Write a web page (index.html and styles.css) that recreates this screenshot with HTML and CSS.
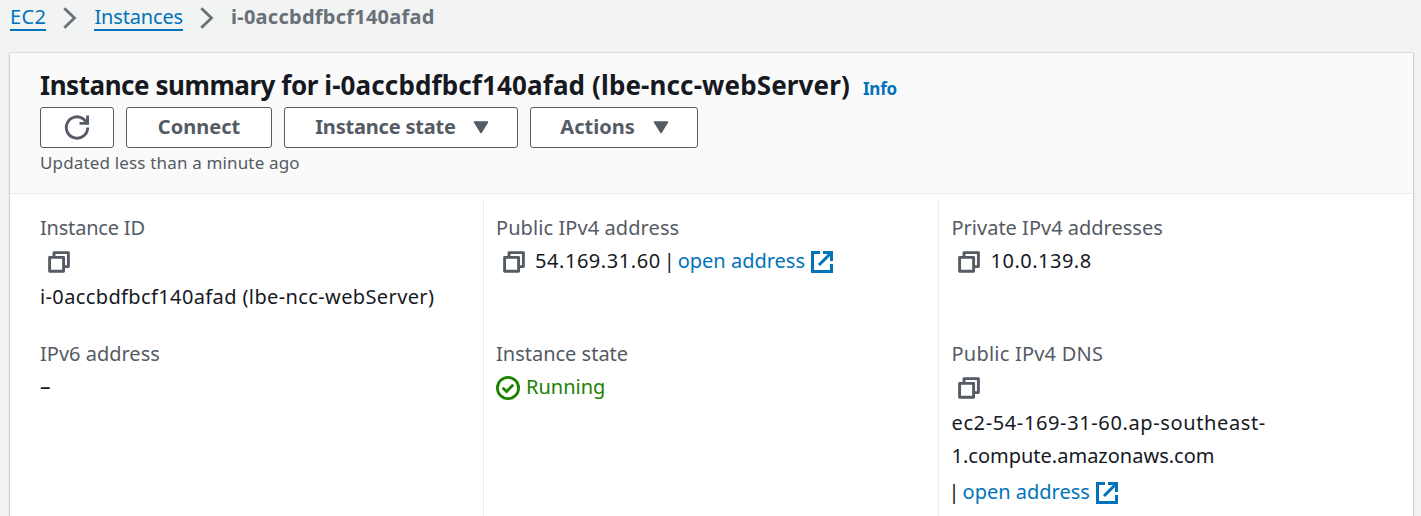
FILE: index.html
```html
<!DOCTYPE html>
<html lang="en">
<head>
<meta charset="utf-8">
<title>Instance summary</title>
<link rel="stylesheet" href="styles.css">
</head>
<body>
<svg class="defs" width="0" height="0" aria-hidden="true">
  <symbol id="chevron" viewBox="0 0 14 22"><path d="M1.3 1.2 L11.5 11 L1.3 20.8" fill="none" stroke="currentColor" stroke-width="2.8"/></symbol>
  <symbol id="copy" viewBox="0 0 22 22"><path d="M1.6 6.4H15.6V20.2H1.6Z M6 6.4V1.6H20.4V15.6H15.6" fill="none" stroke="currentColor" stroke-width="2.9" stroke-linejoin="round"/></symbol>
  <symbol id="external" viewBox="0 0 22 22"><path d="M9 1.5H1.5V20.5H20.5V13M12 1.5H20.5V10M20 2L8 14" fill="none" stroke="currentColor" stroke-width="3"/></symbol>
  <symbol id="caret" viewBox="0 0 16 13"><path d="M1.5 1H14.5L8 11.5Z" fill="currentColor" stroke="currentColor" stroke-width="1.5" stroke-linejoin="round"/></symbol>
</svg>
<nav class="crumbs">
  <a class="crumb crumb-ec2">EC2</a>
  <svg class="chevron"><use href="#chevron"/></svg>
  <a class="crumb crumb-instances">Instances</a>
  <svg class="chevron"><use href="#chevron"/></svg>
  <span class="current">i-0accbdfbcf140afad</span>
</nav>
<main class="panel">
  <header class="head">
    <div class="title-row"><h1 class="title"><span class="title-lead">Instance summary for </span>i-0accbdfbcf140afad (lbe-ncc-webServer)</h1><a class="info">Info</a></div>
    <div class="buttons">
      <button class="btn btn-refresh" aria-label="Refresh"><svg class="refresh" viewBox="0 0 26 26"><path d="M23.7 12.5A10.7 10.7 0 1 1 19.5 4L23.6 8.2M23.6 .5V8.4H15.5" fill="none" stroke="currentColor" stroke-width="2.9"/></svg></button>
      <button class="btn btn-connect"><span>Connect</span></button>
      <button class="btn btn-state"><span>Instance state</span><svg class="caret"><use href="#caret"/></svg></button>
      <button class="btn btn-actions"><span>Actions</span><svg class="caret"><use href="#caret"/></svg></button>
    </div>
    <div class="updated">Updated less than a minute ago</div>
  </header>
  <div class="details">
    <section class="col">
      <div class="field">
        <div class="label l1">Instance ID</div>
        <div class="icon-line"><svg class="copy"><use href="#copy"/></svg></div>
        <div class="value v1">i-0accbdfbcf140afad (lbe-ncc-webServer)</div>
      </div>
      <div class="field">
        <div class="label l2">IPv6 address</div>
        <div class="value"><span class="dash">–</span></div>
      </div>
    </section>
    <section class="col">
      <div class="field">
        <div class="label l3">Public IPv4 address</div>
        <div class="value row"><svg class="copy"><use href="#copy"/></svg><span class="ip">54.169.31.60</span><span class="bar">|</span><a class="open">open address</a><svg class="external"><use href="#external"/></svg></div>
      </div>
      <div class="field">
        <div class="label l4">Instance state</div>
        <div class="value row running"><svg class="status" viewBox="0 0 24 24"><circle cx="12" cy="12" r="10.6" fill="none" stroke="currentColor" stroke-width="2.8"/><path d="M6.6 11.8L10.6 15.5L17.2 8.8" fill="none" stroke="currentColor" stroke-width="2.8"/></svg><span class="state">Running</span></div>
      </div>
    </section>
    <section class="col">
      <div class="field">
        <div class="label l5">Private IPv4 addresses</div>
        <div class="value row"><svg class="copy"><use href="#copy"/></svg><span class="private">10.0.139.8</span></div>
      </div>
      <div class="field">
        <div class="label l6">Public IPv4 DNS</div>
        <div class="icon-line"><svg class="copy"><use href="#copy"/></svg></div>
        <div class="value v2">ec2-54-169-31-60.ap-southeast-</div>
        <div class="value v3">1.compute.amazonaws.com</div>
        <div class="value row last"><span class="bar first">|</span><a class="open">open address</a><svg class="external"><use href="#external"/></svg></div>
      </div>
    </section>
  </div>
</main>
</body>
</html>
```
FILE: styles.css
```css
* { box-sizing: border-box; }
html, body { margin: 0; height: 516px; overflow: hidden; }
body { background: #f2f3f3; color: #16191f; font: 20px/33px "Noto Sans", sans-serif; display: flex; flex-direction: column; white-space: nowrap; }
svg { display: block; flex: none; }
.defs { position: absolute; }
.crumbs { height: 53px; flex: none; padding: 3px 0 0 10px; display: flex; align-items: flex-start; color: #687078; }
.crumb { color: #0073bb; line-height: 28px; height: 28px; border-bottom: 2px solid #0073bb; }
.crumb-ec2 { letter-spacing: .4px; }
.crumb-instances { letter-spacing: -.15px; }
.chevron { width: 14px; height: 22px; margin: 4px 17px 0 17px; }
.current { font-weight: 700; line-height: 28px; letter-spacing: .25px; }
.panel { width: 1403px; height: 463px; margin-left: 10px; background: #fff; box-shadow: 0 0 1px 0 #879196, 0 1px 2px 0 #a5acac; }
.head { height: 141px; background: #fafafa; border-bottom: 1px solid #eaeded; padding: 16px 30px 0; }
.title-row { height: 38px; display: flex; align-items: baseline; gap: 13px; }
.title { margin: 0; font-size: 26px; font-weight: 700; line-height: 33px; letter-spacing: .13px; }
.title-lead { letter-spacing: -.45px; }
.info { color: #0073bb; font-size: 17px; font-weight: 700; letter-spacing: -.2px; }
.buttons { display: flex; gap: 12px; height: 41px; }
.btn { display: flex; align-items: center; justify-content: center; border: 1px solid #545b64; border-radius: 3px; background: #fff; color: #545b64; font: 700 20px/33px "Noto Sans", sans-serif; padding: 0; }
.btn span { padding-bottom: 2px; }
.btn-refresh { width: 74px; }
.btn-connect { width: 146px; }
.btn-state { width: 234px; letter-spacing: -.2px; padding-left: 2px; }
.btn-actions { width: 168px; }
.refresh { width: 26px; height: 26px; }
.caret { width: 16px; height: 13px; margin-left: 17px; }
.btn-actions .caret { margin: 0 -1px 0 18px; }
.updated { font-size: 17px; line-height: 30px; color: #545b64; letter-spacing: .16px; }
.details { display: flex; height: 322px; padding: 6px 0 0 18px; }
.col { width: 455px; padding: 11px 0 0 12px; border-left: 1px solid #eaeded; }
.col:first-child { border-left-color: transparent; padding-left: 11px; }
.col:last-child { padding-left: 12.5px; }
.field { height: 126px; }
.label { color: #545b64; }
.l1 { letter-spacing: -.2px; }
.l3 { letter-spacing: .08px; }
.l6 { letter-spacing: .22px; }
.v1 { letter-spacing: .38px; }
.v2 { letter-spacing: .62px; }
.ip { letter-spacing: .55px; }
.private { letter-spacing: .5px; }
.row { display: flex; align-items: center; }
.icon-line { height: 36px; padding: 7px 0 0; }
.copy { width: 22px; height: 22px; margin-left: 7px; margin-right: 10px; color: #545b64; }
.col:last-child .copy { margin-left: 6.5px; margin-right: 10.5px; }
.col:first-child .copy { margin-left: 7.5px; }
.row .copy { margin-top: 3px; }
.dash { font-size: 21px; }
.bar { margin: 0 3px; }
.bar.first { margin-left: -3px; }
.open { color: #0073bb; }
.external { width: 22px; height: 22px; margin: 3px 0 0 6px; color: #0073bb; }
.running { color: #1d8102; }
.status { width: 24px; height: 24px; margin: 2px 6px 0 0; }
.last { margin-top: 3px; }
```
